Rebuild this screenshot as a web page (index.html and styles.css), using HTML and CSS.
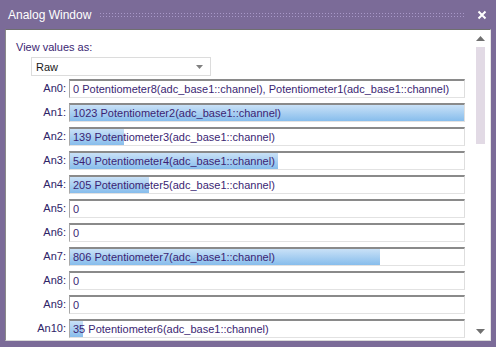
FILE: index.html
```html
<!DOCTYPE html>
<html>
<head>
<meta charset="utf-8">
<link rel="stylesheet" href="styles.css">
</head>
<body>
<div class="window">
  <div class="titlebar">
    <span class="title">Analog Window</span>
    <span class="dots"></span>
    <svg class="close" width="10" height="10" viewBox="0 0 10 10"><path d="M1.5 1.5L8.5 8.5M8.5 1.5L1.5 8.5" stroke="#fff" stroke-width="2"/></svg>
  </div>
  <div class="panel">
    <div class="content">
      <div class="viewas">View values as:</div>
      <div class="select"><span>Raw</span><svg width="7" height="4" viewBox="0 0 7 4"><path d="M0 0H7L3.5 4Z" fill="#808080"/></svg></div>
      <div class="rows">
        <div class="row"><span class="label">An0:</span><div class="field"><span class="text">0 Potentiometer8(adc_base1::channel), Potentiometer1(adc_base1::channel)</span></div></div>
        <div class="row"><span class="label">An1:</span><div class="field"><div class="bar" style="width:100%"></div><span class="text">1023 Potentiometer2(adc_base1::channel)</span></div></div>
        <div class="row"><span class="label">An2:</span><div class="field"><div class="bar" style="width:13.6%"></div><span class="text">139 Potentiometer3(adc_base1::channel)</span></div></div>
        <div class="row"><span class="label">An3:</span><div class="field"><div class="bar" style="width:52.8%"></div><span class="text">540 Potentiometer4(adc_base1::channel)</span></div></div>
        <div class="row"><span class="label">An4:</span><div class="field"><div class="bar" style="width:20%"></div><span class="text">205 Potentiometer5(adc_base1::channel)</span></div></div>
        <div class="row"><span class="label">An5:</span><div class="field"><span class="text">0</span></div></div>
        <div class="row"><span class="label">An6:</span><div class="field"><span class="text">0</span></div></div>
        <div class="row"><span class="label">An7:</span><div class="field"><div class="bar" style="width:78.8%"></div><span class="text">806 Potentiometer7(adc_base1::channel)</span></div></div>
        <div class="row"><span class="label">An8:</span><div class="field"><span class="text">0</span></div></div>
        <div class="row"><span class="label">An9:</span><div class="field"><span class="text">0</span></div></div>
        <div class="row"><span class="label">An10:</span><div class="field"><div class="bar" style="width:3.4%"></div><span class="text">35 Potentiometer6(adc_base1::channel)</span></div></div>
      </div>
    </div>
    <div class="scrollbar">
      <svg class="arrow" width="9" height="5" viewBox="0 0 9 5"><path d="M4.5 0L9 5H0Z" fill="#707070"/></svg>
      <div class="thumb"></div>
      <div class="spacer"></div>
      <svg class="arrow" width="9" height="5" viewBox="0 0 9 5"><path d="M0 0H9L4.5 5Z" fill="#707070"/></svg>
    </div>
  </div>
</div>
</body>
</html>
```
FILE: styles.css
```css
* { box-sizing: border-box; }
html, body { margin: 0; padding: 0; }
body {
  width: 496px;
  height: 347px;
  overflow: hidden;
  background: #7b6b98;
  font-family: "Liberation Sans", Arial, sans-serif;
  font-size: 11px;
}
.window {
  width: 496px;
  height: 347px;
  display: flex;
  flex-direction: column;
}
.titlebar {
  height: 29px;
  display: flex;
  align-items: center;
  padding: 0 9px 0 8px;
  flex: none;
}
.title {
  color: #fff;
  font-size: 12px;
  white-space: nowrap;
}
.dots {
  flex: 1;
  height: 6px;
  margin: 1px 12px 0 8px;
  background-image: radial-gradient(circle, #a898c8 0.8px, transparent 1px);
  background-size: 3px 3px;
}
.close { flex: none; }
.panel {
  flex: 1;
  margin: 0 5px 6px 5px;
  background: #fff;
  border-top: 1px solid #6f6f6f;
  border-left: 1px solid #8a8a8a;
  border-right: 1px solid #e4e4e4;
  border-bottom: 1px solid #d8d8d8;
  display: flex;
  overflow: hidden;
}
.content {
  flex: 1;
  padding: 10px 0 0 10px;
  color: #3b1f73;
}
.viewas {
  line-height: 14px;
  height: 14px;
}
.select {
  margin: 3px 0 0 15px;
  width: 180px;
  height: 19px;
  border: 1px solid #dcdcdc;
  display: flex;
  align-items: center;
  justify-content: space-between;
  padding: 0 7px 0 4px;
  color: #1a1a1a;
}
.rows {
  margin-top: 3px;
  display: flex;
  flex-direction: column;
  gap: 6px;
}
.row {
  display: flex;
  align-items: center;
  height: 18px;
}
.label {
  width: 53px;
  text-align: right;
  padding-right: 3px;
  flex: none;
  color: #2e2468;
}
.field {
  position: relative;
  width: 396px;
  height: 19px;
  border-top: 2px solid #8a8a8a;
  border-left: 1px solid #a8a8a8;
  border-right: 1px solid #dedede;
  border-bottom: 1px solid #e2e2e2;
  display: flex;
  align-items: center;
  background: #fff;
}
.bar {
  position: absolute;
  left: 0;
  top: 0;
  bottom: 0;
  background: linear-gradient(#c9e1f7, #87bdec);
}
.text {
  position: relative;
  padding-left: 3px;
  white-space: nowrap;
  color: #3b1f73;
}
.scrollbar {
  width: 19px;
  flex: none;
  display: flex;
  flex-direction: column;
  align-items: center;
  padding: 6px 0 6px 0;
}
.thumb {
  margin-top: 6px;
  width: 9px;
  height: 97px;
  background: #e2dae5;
}
.spacer { flex: 1; }
```
